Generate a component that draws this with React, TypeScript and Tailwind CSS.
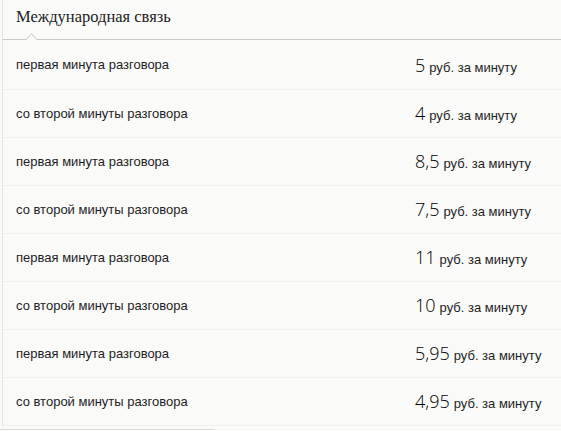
import React from 'react'

const rows = [
  { label: 'первая минута разговора', price: '5' },
  { label: 'со второй минуты разговора', price: '4' },
  { label: 'первая минута разговора', price: '8,5' },
  { label: 'со второй минуты разговора', price: '7,5' },
  { label: 'первая минута разговора', price: '11' },
  { label: 'со второй минуты разговора', price: '10' },
  { label: 'первая минута разговора', price: '5,95' },
  { label: 'со второй минуты разговора', price: '4,95' },
]

export default function App() {
  return (
    <div className="w-[561px] h-[431px] bg-[#fafaf9] overflow-hidden">
      <div className="ml-[2px] border-l border-[#e4e4e2]">
        {/* Header */}
        <div className="relative h-[40px] border-b border-[#c9c9c7]">
          <h2 className="pl-[13px] pt-[6px] text-[16.5px] leading-[22px] text-[#222] font-['Liberation_Serif',serif]">
            Международная связь
          </h2>
          <svg
            className="absolute left-[18px] top-[32px]"
            width="20"
            height="9"
            viewBox="0 0 20 9"
          >
            <rect x="2" y="6" width="16" height="3" fill="#fafaf9" />
            <polyline points="2,7.5 5.5,7.5 10.5,1.5 15.5,7.5 19,7.5" fill="none" stroke="#c9c9c7" strokeWidth="1" />
          </svg>
        </div>

        {/* Rates */}
        <div>
          {rows.map((row, i) => (
            <div
              key={i}
              className={`grid grid-cols-[399px_1fr] items-center pl-[13px] border-b border-[#efefed] ${
                i === 0 ? 'h-[50px] pt-[1px]' : 'h-[48px]'
              }`}
            >
              <span className="text-[13px] text-[#1e1e1e] font-['Liberation_Sans',Arial,sans-serif]">
                {row.label}
              </span>
              <span className="flex items-baseline text-[#1e1e1e] font-['Liberation_Sans',Arial,sans-serif]">
                <span className="text-[18px] font-light text-black font-['Open_Sans',sans-serif]">{row.price}</span>
                <span className="text-[13px] ml-[4px]">руб. за минуту</span>
              </span>
            </div>
          ))}
        </div>
      </div>
      <div className="mt-[3px] w-[215px] h-px bg-[#dcdcda]" />
    </div>
  )
}
